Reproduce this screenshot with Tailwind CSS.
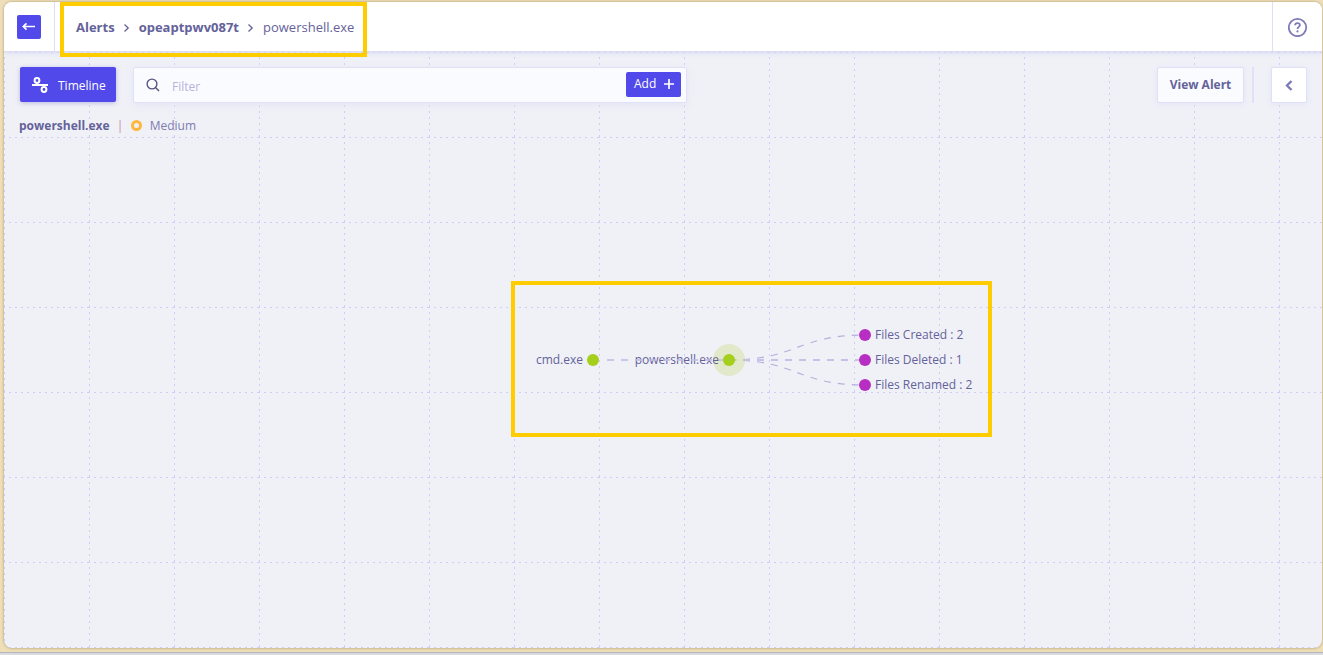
<!DOCTYPE html>
<html lang="en">
<head>
    <meta charset="UTF-8">
    <meta name="viewport" content="width=device-width, initial-scale=1">
    <title>powershell.exe | Alerts</title>
    <script src="https://cdn.jsdelivr.net/npm/@tailwindcss/browser@4"></script>
</head>
<body class="flex h-screen flex-col overflow-hidden bg-[#eedfb9] font-['Open_Sans','Noto_Sans',sans-serif] text-xs text-[#64629a]">
    <div class="mt-0.5 mr-px mb-1 ml-1 flex min-h-0 flex-1 flex-col overflow-hidden rounded-lg bg-[#f0f1f7] shadow-[0_0_3px_#a8946a]">

        <header class="relative z-10 flex h-[50px] shrink-0 border-b border-[#dcdcf5] bg-white shadow-[0_1px_5px_#d9daf0]">
            <div class="flex w-[51px] items-center border-r border-[#dedef8] pl-[13px]">
                <button aria-label="Back" class="flex size-6 items-center justify-center rounded-xs bg-[#5149ea] text-white">
                    <svg class="size-4" viewBox="0 0 16 16" fill="none" stroke="currentColor" stroke-width="1.7"><path d="M14 7.5H2.5M5.5 4.3L2.3 7.5L5.5 10.7"/></svg>
                </button>
            </div>
            <nav aria-label="Breadcrumb" class="relative flex items-center px-[21px] pt-0.5 text-[13px]">
                <a href="#" class="font-bold">Alerts</a>
                <svg class="mx-2 size-2" viewBox="0 0 8 8" fill="none" stroke="currentColor" stroke-width="1.3"><path d="M1.5 0.5L5.2 4L1.5 7.5"/></svg>
                <a href="#" class="font-bold">opeaptpwv087t</a>
                <svg class="mx-2 size-2" viewBox="0 0 8 8" fill="none" stroke="currentColor" stroke-width="1.3"><path d="M1.5 0.5L5.2 4L1.5 7.5"/></svg>
                <span>powershell.exe</span>
                <!-- callout around the breadcrumb -->
                <div class="pointer-events-none absolute top-0 right-2 left-[5px] h-[55px] border-4 border-[#ffcc00]"></div>
            </nav>
            <button aria-label="Help" class="ml-auto flex w-[50px] items-center justify-center border-l border-[#dedef8] text-[#7f7bb8]">
                <svg class="size-5" viewBox="0 0 20 20" fill="none" stroke="currentColor" stroke-width="1.8"><circle cx="9.5" cy="10.5" r="8.7"/><path d="M7.1 8.3C7.2 6.8 8.2 6.1 9.5 6.1C10.9 6.1 11.9 6.9 11.9 8.1C11.9 9.9 9.5 9.9 9.5 12"/><circle cx="9.5" cy="14.4" r="1.1" fill="currentColor" stroke="none"/></svg>
            </button>
        </header>

        <main class="relative min-h-0 flex-1">
            <svg class="absolute inset-0 size-full" aria-hidden="true">
                <defs>
                    <pattern id="grid" width="85" height="85" patternUnits="userSpaceOnUse">
                        <path d="M0 0.5H85M0.5 0V85" fill="none" stroke="#cfcdf7" stroke-dasharray="2 4" stroke-dashoffset="1"/>
                    </pattern>
                </defs>
                <rect width="100%" height="100%" fill="url(#grid)"/>
            </svg>

            <div class="relative flex items-start pt-[15px] pr-[15px] pl-4">
                <button class="flex h-[35px] w-24 items-center gap-2 rounded-xs bg-[#5149ea] pt-0.5 pl-3 text-white shadow-[0_1px_5px_#b9b8dc]">
                    <svg class="-mt-0.5 h-[18px] w-[18px]" viewBox="0 0 18 18" fill="none" stroke="currentColor" stroke-width="2"><path d="M0 9H16"/><circle cx="5" cy="4.5" r="2.4"/><circle cx="12" cy="13.5" r="2.4"/></svg>
                    Timeline
                </button>
                <div class="ml-[17px] flex h-9 w-[554px] items-center rounded-xs border border-[#e0e0f8] bg-[#fafbff] pr-[5px] pl-3 shadow-[0_2px_8px_#e2e4f3]">
                    <svg class="size-3.5 text-[#56547f]" viewBox="0 0 14 14" fill="none" stroke="currentColor" stroke-width="1.4"><circle cx="6" cy="6" r="4.9"/><path d="M9.5 9.5L13 13"/></svg>
                    <input type="text" aria-label="Filter" placeholder="Filter" class="ml-3 min-w-0 flex-1 pt-1 outline-none placeholder:text-[#b6b4dc]">
                    <button class="mb-0.5 flex h-[25px] w-[55px] items-center gap-2 rounded-xs bg-[#5149ea] pl-2 text-xs text-white">
                        Add
                        <svg class="size-2.5" viewBox="0 0 10 10" stroke="currentColor" stroke-width="1.7"><path d="M5 0V10M0 5H10"/></svg>
                    </button>
                </div>
                <button class="ml-auto h-9 w-[87px] rounded-xs border border-[#e0e0f8] bg-[#fafbff] font-bold shadow-[0_1px_6px_#e2e4f3]">View Alert</button>
                <div class="ml-2 h-9 w-0.5 bg-[#e0e0fa]"></div>
                <button aria-label="Collapse" class="ml-[17px] flex size-9 items-center justify-center rounded-xs border border-[#e0e0f8] bg-white text-[#7f7bb8] shadow-[0_1px_6px_#e2e4f3]">
                    <svg class="size-3" viewBox="0 0 12 12" fill="none" stroke="currentColor" stroke-width="2.4"><path d="M8.5 2L4 6.5L8.5 11"/></svg>
                </button>
            </div>

            <div class="relative mt-[11px] flex items-center px-[15px] leading-6">
                <span class="font-bold">powershell.exe</span>
                <span class="ml-[7px] w-3.5 text-[#c98aa8]">|</span>
                <span class="mb-0.5 size-[11px] rounded-full border-3 border-[#fdb73e]"></span>
                <span class="ml-2 text-[#7f7bb0]">Medium</span>
            </div>

            <!-- process tree -->
            <svg class="absolute top-[229px] left-[507px] h-[156px] w-[481px] text-xs" viewBox="0 0 481 156" fill="#64629a">
                <g fill="none" stroke="#b3b1dc" stroke-width="1.2" stroke-dasharray="7 7">
                    <path d="M218 79C286 79 286 54 354 54"/>
                    <path d="M218 79C286 79 286 104 354 104"/>
                    <path d="M218 79H354" stroke="#c4c3e5" stroke-width="2"/>
                </g>
                <circle cx="218" cy="79" r="16" fill="#a4cf1b" fill-opacity="0.2"/>
                <circle cx="82" cy="79" r="6" fill="#a4cf1b"/>
                <circle cx="218" cy="79" r="6" fill="#a4cf1b"/>
                <circle cx="354" cy="54" r="6" fill="#b62fc2"/>
                <circle cx="354" cy="79" r="6" fill="#b62fc2"/>
                <circle cx="354" cy="104" r="6" fill="#b62fc2"/>
                <text x="72" y="83" text-anchor="end">cmd.exe</text>
                <text x="208" y="83" text-anchor="end">powershell.exe</text>
                <path d="M96 79H212" fill="none" stroke="#bfbde0" stroke-width="2" stroke-dasharray="7 7" stroke-opacity="0.8"/>
                <text x="364" y="58">Files Created : 2</text>
                <text x="364" y="83">Files Deleted : 1</text>
                <text x="364" y="108">Files Renamed : 2</text>
                <rect x="2" y="2" width="477" height="152" fill="none" stroke="#ffcc00" stroke-width="4"/>
            </svg>
        </main>
    </div>
    <div class="h-[3px] shrink-0 border-t border-[#b5b5b8] bg-[#dadae2]"></div>
</body>
</html>
